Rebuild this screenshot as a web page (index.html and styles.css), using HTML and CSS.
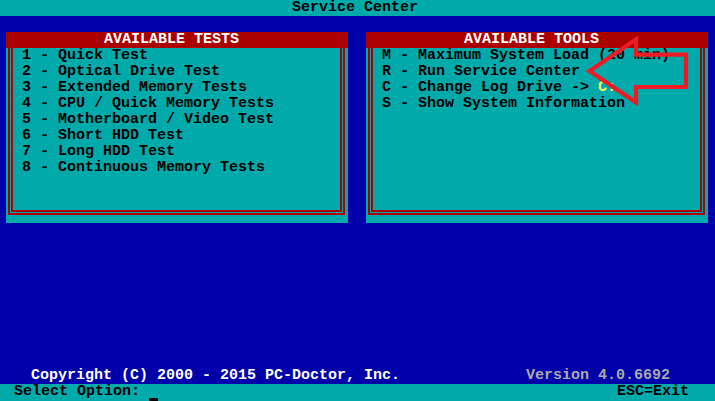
FILE: index.html
```html
<!DOCTYPE html>
<html lang="en">

<head>
    <meta charset="UTF-8">
    <title>Service Center</title>
    <link rel="stylesheet" href="styles.css">
</head>

<body>
    <div class="screen">
        <div class="topbar">Service Center</div>

        <div class="panels">
            <div class="panel">
                <div class="panel-head">AVAILABLE TESTS</div>
                <div class="frame">
                    <div class="item">1 - Quick Test</div>
                    <div class="item">2 - Optical Drive Test</div>
                    <div class="item">3 - Extended Memory Tests</div>
                    <div class="item">4 - CPU / Quick Memory Tests</div>
                    <div class="item">5 - Motherboard / Video Test</div>
                    <div class="item">6 - Short HDD Test</div>
                    <div class="item">7 - Long HDD Test</div>
                    <div class="item">8 - Continuous Memory Tests</div>
                </div>
            </div>
            <div class="panel">
                <div class="panel-head">AVAILABLE TOOLS</div>
                <div class="frame">
                    <div class="item">M - Maximum System Load (20 min)</div>
                    <div class="item">R - Run Service Center</div>
                    <div class="item">C - Change Log Drive -&gt; <span class="yellow">C:</span></div>
                    <div class="item">S - Show System Information</div>
                </div>
            </div>
        </div>

        <div class="spacer"></div>

        <div class="copyright">
            <span class="txt">Copyright (C) 2000 - 2015 PC-Doctor, Inc.</span>
            <span class="txt version">Version 4.0.6692</span>
        </div>
        <div class="statusbar">
            <span class="txt">Select Option: </span>
            <span class="cursor"></span>
            <span class="txt esc">ESC=Exit</span>
        </div>

        <!-- red arrow drawn over the tools box -->
        <svg class="arrow" width="715" height="401" viewBox="0 0 715 401">
            <polygon points="589.5,71 636,39.5 636,54.7 686,54.7 686,87 636,87 636,102.5"
                fill="none" stroke="#ED1C24" stroke-width="4.2" stroke-linejoin="miter" stroke-miterlimit="10" />
        </svg>
    </div>
</body>

</html>
```

FILE: styles.css
```css
body {
    margin: 0;
    background: #0000AA;
    font-family: "Liberation Mono", "DejaVu Sans Mono", monospace;
    font-size: 15px;
    font-weight: bold;
    line-height: 16px;
    color: #000;
}

.screen {
    position: relative;
    width: 715px;
    height: 401px;
    overflow: hidden;
    display: flex;
    flex-direction: column;
}

.topbar,
.panel-head,
.item,
.txt {
    white-space: pre;
}

.topbar {
    height: 16px;
    background: #00AAAA;
    padding-left: 292px;
}

/*--------------------------*/
.panels {
    display: flex;
    gap: 18px;
    padding: 16px 0 0 6px;
}

.panel {
    width: 342px;
    height: 191px;
    background: #00AAAA;
    display: flex;
    flex-direction: column;
}

.panel-head {
    height: 16px;
    background: #AA0000;
    color: #fff;
    padding-left: 98px;
}

.frame {
    flex: 1;
    margin: 0 3px 8px 2px;
    border: 5px double #AA0000;
    border-top: 0;
    padding-left: 9px;
}

.item {
    height: 16px;
}

.yellow {
    color: #FFFF55;
}

.spacer {
    flex: 1;
}

/*--------------------------*/
.copyright {
    height: 16px;
    display: flex;
    justify-content: space-between;
    padding: 0 45px 0 31px;
    color: #fff;
}

.copyright .version {
    color: #AAAAAA;
}

.statusbar {
    height: 17px;
    background: #00AAAA;
    display: flex;
    padding: 0 26px 0 14px;
}

.statusbar .cursor {
    align-self: flex-end;
    width: 9px;
    height: 3px;
    background: #000;
}

.statusbar .esc {
    margin-left: auto;
}

.arrow {
    position: absolute;
    top: 0;
    left: 0;
}
```
